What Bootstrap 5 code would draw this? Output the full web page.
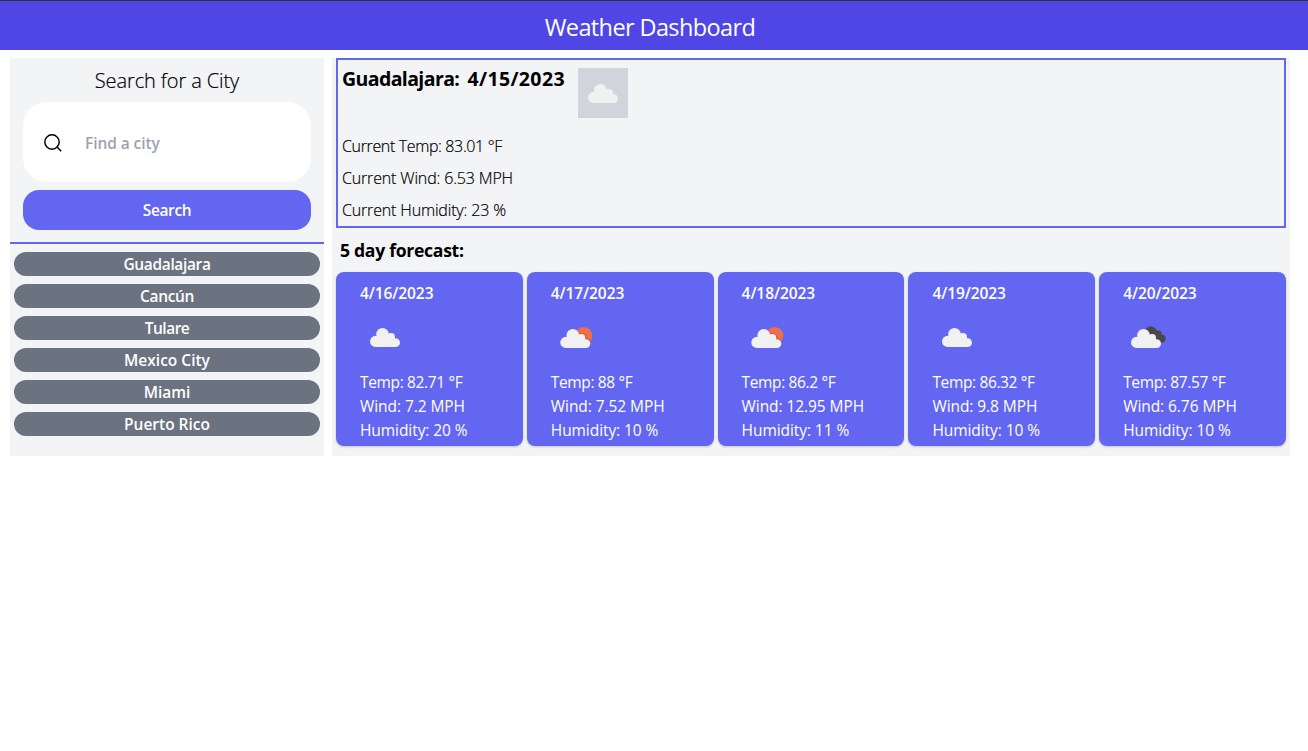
<!DOCTYPE html>
<html lang="en">
<head>
<meta charset="utf-8">
<meta name="viewport" content="width=device-width, initial-scale=1">
<title>Weather Dashboard</title>
<link href="https://cdn.jsdelivr.net/npm/bootstrap@5.3.0/dist/css/bootstrap.min.css" rel="stylesheet">
<script src="https://cdn.jsdelivr.net/npm/bootstrap@5.3.0/dist/js/bootstrap.bundle.min.js" defer></script>
<style>
body{font-family:"Open Sans","Noto Sans",sans-serif;font-size:15.5px;line-height:24px;color:#000;background:#fff}
.topbar{height:50px;border-top:1px solid #333;background:#4f46e5;padding:2px 8px 0 0}
.topbar h1{font-size:23.5px;line-height:32px;letter-spacing:-.61px}
.layout{width:1300px;padding:8px 10px;gap:8px}
.panel{background:#f3f4f6;height:398px}
.side{width:314px}
.search-area{height:186px;border-bottom:2px solid #6366f1;padding:9px 13px 0}
.search-area h2{font-size:20px;line-height:28px;font-weight:300;height:35px;letter-spacing:-.1px;-webkit-text-stroke:.2px #000}
.search-box{height:80px;border-radius:24px;background:#fff;padding-left:20px}
.search-box svg{margin-top:1px}
.search-box input{border:0;outline:0;background:transparent;font-size:15.5px;font-weight:600;letter-spacing:-.08px;width:200px;margin-left:22px;padding:1px 0 0;height:28px}
.search-box input::placeholder{color:#9ca3af;opacity:1}
.search-btn{height:40px;border-radius:16px;background:#6366f1;color:#fff;font-size:15.5px;font-weight:600;border:0;padding:1px 0 0;letter-spacing:-.35px}
.city{height:24px;border-radius:12px;background:#6b7280;color:#fff;font-size:15.5px;font-weight:600;border:0;padding:1px 0 0;line-height:23px}
.snug{letter-spacing:-.16px}
.tight{letter-spacing:-.36px}
.tighter{letter-spacing:-.5px}
.current{height:170px;border:2px solid #6366f1;padding:8px 4px 0}
.current-head{height:66px}
.current h2{font-size:19.5px;line-height:28px;font-weight:700;margin-top:-3px}
.place{width:125.5px;letter-spacing:-.6px}
.date{width:110.5px;letter-spacing:.36px}
.tile{width:50px;height:50px;background:#d1d5db}
.light-line{font-size:16px;font-weight:300;line-height:24px;margin-bottom:8px;-webkit-text-stroke:.2px #000}
.five{font-size:17.6px;line-height:28px;font-weight:700;letter-spacing:-.3px}
.day{background:#6366f1;color:#fff;border-radius:8px;height:174px;padding:8px 0 0 24px;flex:1 1 0;box-shadow:0 1px 3px rgba(0,0,0,.1),0 1px 2px rgba(0,0,0,.1)}
.day h3{font-size:15.5px;line-height:26px;height:24px;font-weight:600;letter-spacing:-.08px}
.day p{line-height:24px}
.day p:not(.tight){letter-spacing:-.07px}
svg{display:block}
</style>
</head>
<body>
<svg width="0" height="0" class="position-absolute"><defs>
<g id="cloud" fill="#f1f1f1"><circle cx="5.6" cy="13.4" r="5.6"/><circle cx="12.5" cy="6.3" r="6.3"/><circle cx="21" cy="9" r="4"/><circle cx="25.6" cy="14.6" r="4.4"/><path d="M5.6 19V9L12 4l6.5 2 7.1 8v5z"/></g>
<g id="sunny"><circle cx="32.7" cy="23.6" r="8.7" fill="#ec6e4c"/><g fill="#e0523a"><circle cx="22" cy="23.2" r="6.8" clip-path="url(#sun-disc)"/><circle cx="31" cy="26" r="4.7" clip-path="url(#sun-disc)"/><circle cx="35.3" cy="31.4" r="5.2" clip-path="url(#sun-disc)"/></g><use href="#cloud" x="9.3" y="17"/></g>
<clipPath id="sun-disc"><circle cx="32.7" cy="23.6" r="8.7"/></clipPath>
<g id="broken"><g fill="#484848"><circle cx="27.8" cy="20" r="5.8"/><circle cx="35" cy="22.2" r="3.7"/><circle cx="38.8" cy="26.6" r="3.9"/><path d="M27 20l6-2 6 5v7.5H27z"/></g><use href="#cloud" x="8" y="17"/></g>
</defs></svg>
<header class="topbar d-flex align-items-center justify-content-center text-white"><h1 class="m-0 fw-normal">Weather Dashboard</h1></header>
<main class="layout d-flex">
<aside class="panel side flex-shrink-0">
<div class="search-area">
<h2 class="text-center m-0">Search for a City</h2>
<div class="search-box d-flex align-items-center mb-2">
<svg width="20" height="20" viewBox="0 0 20 20" fill="none" stroke="#000" stroke-width="1.5"><circle cx="9" cy="9" r="7.2"/><path d="m14.2 14.2 4 4"/></svg>
<input type="text" placeholder="Find a city" aria-label="Find a city"></div>
<button class="btn search-btn w-100 d-block">Search</button>
</div>
<div class="d-grid gap-2 px-1 pt-2">
<button class="btn city tight">Guadalajara</button>
<button class="btn city tight">Cancún</button>
<button class="btn city tighter">Tulare</button>
<button class="btn city">Mexico City</button>
<button class="btn city">Miami</button>
<button class="btn city">Puerto Rico</button>
</div>
</aside>
<section class="panel flex-grow-1 px-1">
<div class="current">
<div class="current-head d-flex"><h2 class="d-flex mb-0"><span class="place">Guadalajara:</span><span class="date">4/15/2023</span></h2><div class="tile"><svg width="50" height="50"><use href="#cloud" x="10" y="16"/></svg></div></div>
<p class="light-line tight">Current Temp: 83.01 °F</p>
<p class="light-line snug">Current Wind: 6.53 MPH</p>
<p class="light-line snug">Current Humidity: 23 %</p>
</div>
<h2 class="five m-0 ps-1 py-2">5 day forecast:</h2>
<div class="d-flex gap-1">
<article class="day"><h3 class="mb-2">4/16/2023</h3><svg class="mb-2" width="50" height="50"><use href="#cloud" x="10" y="16"/></svg><p class="mb-0 tight">Temp: 82.71 °F</p><p class="mb-0">Wind: 7.2 MPH</p><p class="mb-0">Humidity: 20 %</p></article>
<article class="day"><h3 class="mb-2">4/17/2023</h3><svg class="mb-2" width="50" height="50"><use href="#sunny"/></svg><p class="mb-0 tight">Temp: 88 °F</p><p class="mb-0">Wind: 7.52 MPH</p><p class="mb-0">Humidity: 10 %</p></article>
<article class="day"><h3 class="mb-2">4/18/2023</h3><svg class="mb-2" width="50" height="50"><use href="#sunny"/></svg><p class="mb-0 tight">Temp: 86.2 °F</p><p class="mb-0">Wind: 12.95 MPH</p><p class="mb-0">Humidity: 11 %</p></article>
<article class="day"><h3 class="mb-2">4/19/2023</h3><svg class="mb-2" width="50" height="50"><use href="#cloud" x="10" y="16"/></svg><p class="mb-0 tight">Temp: 86.32 °F</p><p class="mb-0">Wind: 9.8 MPH</p><p class="mb-0">Humidity: 10 %</p></article>
<article class="day"><h3 class="mb-2">4/20/2023</h3><svg class="mb-2" width="50" height="50"><use href="#broken"/></svg><p class="mb-0 tight">Temp: 87.57 °F</p><p class="mb-0">Wind: 6.76 MPH</p><p class="mb-0">Humidity: 10 %</p></article>
</div>
</section>
</main>
</body>
</html>
